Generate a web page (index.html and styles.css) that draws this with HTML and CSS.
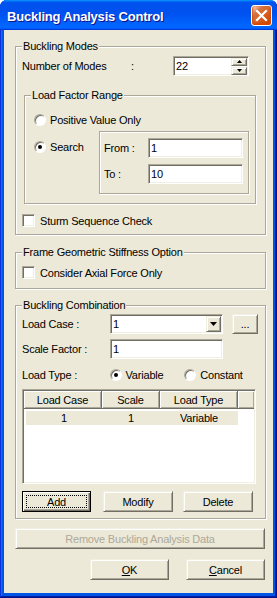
FILE: index.html
```html
<!DOCTYPE html>
<html lang="en">
<head>
    <meta charset="UTF-8">
    <meta name="viewport" content="width=device-width, initial-scale=1.0">
    <title>Buckling Analysis Control</title>
    <link rel="stylesheet" href="styles.css">
</head>
<body>
<div class="window">
    <div class="titlebar">
        <span class="title">Buckling Analysis Control</span>
        <span class="close">
            <svg width="19" height="19" viewBox="0 0 19 19"><path d="M5 5 L14 14 M14 5 L5 14" stroke="#fff" stroke-width="2.2" stroke-linecap="square"/></svg>
        </span>
    </div>

    <div class="client">
        <div class="group g-modes">
            <span class="legend">Buckling Modes</span>
            <div class="row h20">
                <span class="lbl-modes">Number of Modes</span>
                <span class="colon">:</span>
                <div class="field spin">
                    <span class="val">22</span>
                    <div class="spin-btns">
                        <span class="spin-btn"><svg width="5" height="3" viewBox="0 0 5 3"><path d="M2.5 0 L5 3 L0 3 Z" fill="#000"/></svg></span>
                        <span class="spin-btn"><svg width="5" height="3" viewBox="0 0 5 3"><path d="M0 0 L5 0 L2.5 3 Z" fill="#000"/></svg></span>
                    </div>
                </div>
            </div>

            <div class="group g-range">
                <span class="legend">Load Factor Range</span>
                <div class="row opt-positive">
                    <span class="radio"></span><span class="opt-text">Positive Value Only</span>
                </div>
                <div class="search-row">
                    <div class="search-opt">
                        <span class="radio on"></span><span class="opt-text">Search</span>
                    </div>
                    <div class="range-box">
                        <div class="row h20">
                            <span class="lbl-range">From :</span>
                            <div class="field w95"><span class="val">1</span></div>
                        </div>
                        <div class="row h20 mt6">
                            <span class="lbl-range">To :</span>
                            <div class="field w95"><span class="val">10</span></div>
                        </div>
                    </div>
                </div>
            </div>

            <div class="row check-row sturm">
                <span class="check"></span><span class="check-text">Sturm Sequence Check</span>
            </div>
        </div>

        <div class="group g-frame">
            <span class="legend">Frame Geometric Stiffness Option</span>
            <div class="row check-row">
                <span class="check"></span><span class="check-text">Consider Axial Force Only</span>
            </div>
        </div>

        <div class="group g-comb">
            <span class="legend">Buckling Combination</span>
            <div class="row h20">
                <span class="lbl-comb">Load Case :</span>
                <div class="field combo">
                    <span class="val">1</span>
                    <span class="drop">
                        <svg width="7" height="4" viewBox="0 0 7 4"><path d="M0 0 L7 0 L3.5 4 Z" fill="#000"/></svg>
                    </span>
                </div>
                <span class="btn dots">...</span>
            </div>
            <div class="row h20 mt5">
                <span class="lbl-comb">Scale Factor :</span>
                <div class="field w113"><span class="val">1</span></div>
            </div>
            <div class="row type-row">
                <span class="lbl-type">Load Type :</span>
                <span class="type-opt"><span class="radio on"></span><span class="opt-text">Variable</span></span>
                <span class="type-opt"><span class="radio"></span><span class="opt-text">Constant</span></span>
            </div>

            <div class="listview">
                <div class="lv-head">
                    <span class="hcell c1">Load Case</span>
                    <span class="hcell c2">Scale</span>
                    <span class="hcell c3">Load Type</span>
                    <span class="hcell c4"></span>
                </div>
                <div class="lv-row">
                    <span class="cell r1">1</span>
                    <span class="cell c2">1</span>
                    <span class="cell c3">Variable</span>
                </div>
            </div>

            <div class="row btn-row">
                <span class="btn focus b-add">Add</span>
                <span class="btn b-modify">Modify</span>
                <span class="btn b-delete">Delete</span>
            </div>
        </div>

        <span class="btn disabled b-remove">Remove Buckling Analysis Data</span>

        <div class="row footer">
            <span class="btn b-foot"><u>O</u>K</span>
            <span class="btn b-foot"><u>C</u>ancel</span>
        </div>
    </div>
</div>
</body>
</html>
```

FILE: styles.css
```css
body {
    margin: 0;
    background: #fff;
    font-family: "Liberation Sans", Arial, sans-serif;
    font-size: 11px;
    letter-spacing: -0.2px;
    color: #000;
}
.window {
    width: 277px;
    height: 598px;
    display: flex;
    flex-direction: column;
    background: #0055e5;
    border-radius: 7px 7px 0 0;
    box-shadow: inset -1px -1px #00138c, inset 1px 0 #0831d9, inset -2px -2px #001ea0, inset 2px 0 #166aee;
}
.titlebar {
    height: 30px;
    flex: none;
    display: flex;
    align-items: center;
    justify-content: space-between;
    padding: 0 5px 0 7px;
    border-radius: 7px 7px 0 0;
    background: linear-gradient(180deg, #0997ff, #0053ee 8%, #0050ee 40%, #06f 88%, #06f 93%, #005bff 95%, #003dd7 96%, #003dd7);
}
.title {
    color: #fff;
    font-weight: bold;
    font-size: 13px;
    padding-top: 2px;
    text-shadow: 1px 1px #0f1089;
}
.close {
    width: 21px;
    height: 21px;
    box-sizing: border-box;
    border: 1px solid #fff;
    border-radius: 3px;
    display: flex;
    align-items: center;
    justify-content: center;
    background: radial-gradient(circle at 90% 90%, #cc4600 0, #dc6527 55%, #cd7546 70%, #ffccb2 90%, #fff 100%);
    box-shadow: inset 0 -1px 2px 1px #da4600;
}
.client {
    flex: 1;
    margin: 0 4px 5px;
    padding: 16px 7px 0 11px;
    background: #ece9d8;
}

.row {
    display: flex;
    align-items: center;
}
.h20 { height: 20px; }
.mt5 { margin-top: 5px; }
.mt6 { margin-top: 6px; }

/* etched group boxes */
.group {
    position: relative;
    border: 1px solid #aca899;
    box-shadow: 1px 1px 0 #fff, inset 1px 1px 0 #fff;
    padding: 0 6px;
}
.legend {
    position: absolute;
    top: -7px;
    left: 6px;
    padding: 0 1px;
    line-height: 13px;
    background: #ece9d8;
}
.g-modes {
    padding-top: 9px;
    padding-bottom: 7px;
}
.lbl-modes { width: 109px; }
.colon { width: 42px; }

.g-range {
    width: 232px;
    box-sizing: border-box;
    margin: 19px 0 0 2px;
    padding: 0 0 9px 9px;
}
.opt-positive {
    margin-top: 17px;
    height: 13px;
}
.search-row {
    display: flex;
    margin-top: 5px;
}
.search-opt {
    width: 65px;
    padding-top: 9px;
    display: flex;
    align-items: center;
    align-self: flex-start;
    height: 13px;
}
.range-box {
    width: 150px;
    box-sizing: border-box;
    border: 1px solid #aca899;
    box-shadow: 1px 1px 0 #fff, inset 1px 1px 0 #fff;
    padding: 6px 0 9px 4px;
}
.lbl-range { width: 44px; }

.sturm { margin-top: 10px; }
.check-row { height: 13px; }

.g-frame {
    margin-top: 17px;
    padding-top: 13px;
    padding-bottom: 9px;
}
.g-comb {
    margin-top: 16px;
    padding-top: 8px;
    padding-bottom: 6px;
}
.lbl-comb { width: 88px; }
.lbl-type { width: 89px; }
.type-row {
    margin-top: 9px;
    height: 13px;
}
.type-opt {
    width: 76px;
    display: flex;
    align-items: center;
}

/* sunken text fields */
.field {
    height: 20px;
    box-sizing: border-box;
    display: flex;
    align-items: center;
    background: #fff;
    border: 1px solid;
    border-color: #aca899 #fff #fff #aca899;
    box-shadow: inset 1px 1px #716f64, inset -1px -1px #f1efe2;
    padding: 1px 1px 1px 2px;
}
.val { flex: 1; }
.w95 { width: 95px; }
.w113 { width: 113px; }
.spin { width: 76px; }
.spin-btns {
    display: flex;
    flex-direction: column;
    gap: 1px;
}
.spin-btn, .drop {
    box-sizing: border-box;
    display: flex;
    align-items: center;
    justify-content: center;
    background: #ece9d8;
    border: 1px solid;
    border-color: #f1efe2 #716f64 #716f64 #f1efe2;
    box-shadow: inset 1px 1px #fff, inset -1px -1px #aca899;
}
.spin-btn {
    width: 16px;
    height: 8px;
}
.combo { width: 113px; }
.drop {
    width: 15px;
    height: 16px;
}

/* radios and checks */
.radio {
    width: 12px;
    height: 12px;
    flex: none;
    box-sizing: border-box;
    border-radius: 50%;
    background: #fff;
    border: 1px solid;
    border-color: #aca899 #fff #fff #aca899;
    box-shadow: inset 1px 1px #716f64;
    position: relative;
}
.radio.on::after {
    content: "";
    position: absolute;
    left: 3px;
    top: 3px;
    width: 4px;
    height: 4px;
    border-radius: 50%;
    background: #000;
}
.opt-text { margin-left: 4px; }
.check {
    width: 13px;
    height: 13px;
    flex: none;
    box-sizing: border-box;
    background: #fff;
    border: 1px solid;
    border-color: #aca899 #fff #fff #aca899;
    box-shadow: inset 1px 1px #716f64, inset -1px -1px #f1efe2;
}
.check-text { margin-left: 5px; }

/* raised buttons */
.btn {
    box-sizing: border-box;
    display: flex;
    align-items: center;
    justify-content: center;
    height: 21px;
    background: #ece9d8;
    border: 1px solid;
    border-color: #f1efe2 #716f64 #716f64 #f1efe2;
    box-shadow: inset 1px 1px #fff, inset -1px -1px #aca899;
}
.btn u { text-decoration: underline; }
.dots {
    width: 26px;
    height: 20px;
    margin-left: 9px;
}
.btn.focus {
    border-color: #000;
    box-shadow: inset 1px 1px #fff, inset -1px -1px #716f64, inset -2px -2px #aca899;
    outline: 1px dotted #000;
    outline-offset: -5px;
}
.btn-row { margin-top: 7px; }
.b-add { width: 69px; }
.b-modify { width: 70px; margin-left: 12px; }
.b-delete { width: 70px; margin-left: 10px; }
.b-remove {
    margin-top: 9px;
    width: 250px;
    color: #aca899;
}
.footer {
    margin-top: 10px;
    justify-content: flex-end;
    gap: 17px;
    padding-right: 1px;
}
.b-foot { width: 79px; }

/* list view */
.listview {
    margin-top: 8px;
    width: 234px;
    height: 95px;
    box-sizing: border-box;
    padding: 1px;
    background: #fff;
    border: 1px solid;
    border-color: #aca899 #fff #fff #aca899;
    box-shadow: inset 1px 1px #716f64, inset -1px -1px #f1efe2;
}
.lv-head {
    display: flex;
    height: 18px;
}
.hcell {
    box-sizing: border-box;
    display: flex;
    align-items: center;
    justify-content: center;
    background: #ece9d8;
    border-right: 1px solid #716f64;
    border-bottom: 1px solid #716f64;
    box-shadow: inset 1px 1px #fff, inset -1px -1px #aca899;
}
.c1 { width: 78px; }
.c2 { width: 58px; }
.c3 { width: 78px; }
.c4 { width: 16px; border-right: none; }
.lv-row {
    display: flex;
    margin: 2px 0 0 2px;
    height: 14px;
    width: 212px;
    background: #ece9d8;
}
.cell {
    display: flex;
    align-items: center;
    justify-content: center;
}
.r1 { width: 76px; }
```
